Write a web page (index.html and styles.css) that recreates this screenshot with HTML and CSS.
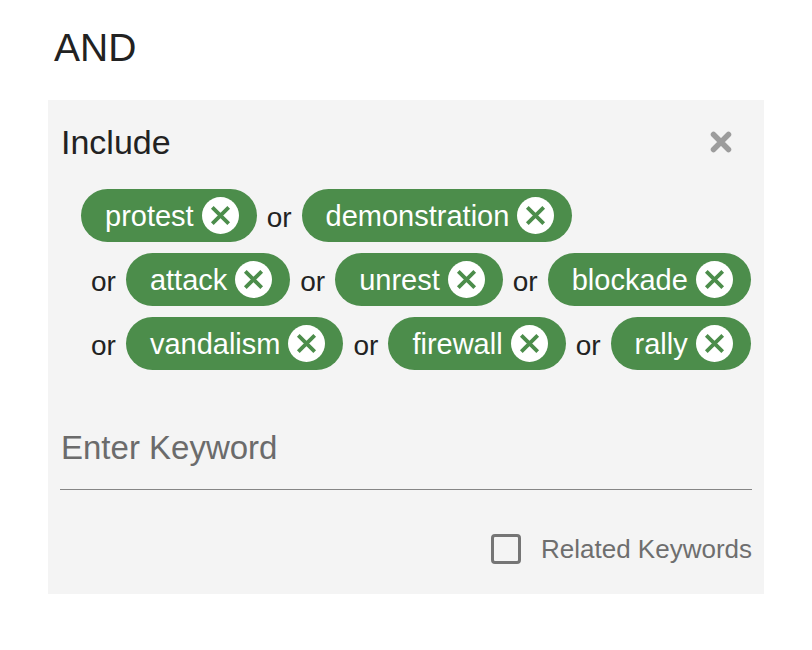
FILE: index.html
```html
<!DOCTYPE html>
<html lang="en">
<head>
<meta charset="utf-8">
<meta name="viewport" content="width=device-width, initial-scale=1">
<title>Keywords</title>
<link rel="stylesheet" href="styles.css">
</head>
<body>
<svg class="defs" aria-hidden="true">
  <symbol id="chip-x" viewBox="0 0 37 37"><circle cx="18.500" cy="18.500" r="18.500" fill="#fff"/><path d="M10.300 10.300 26.700 26.700M26.700 10.300 10.300 26.700" stroke="#4c8d4b" stroke-width="3.800"/></symbol>
</svg>
<main class="page">
  <h1 class="operator">AND</h1>
  <section class="panel">
    <header class="panel-head">
      <h2 class="title">Include</h2>
      <button class="close" type="button" aria-label="Close"><svg viewBox="0 0 22 22"><path d="M3.500 3.500 18.500 18.500M18.500 3.500 3.500 18.500" stroke="#9c9c9c" stroke-width="5.500" stroke-linecap="round"/></svg></button>
    </header>
    <ul class="chips">
      <li class="item"><span class="chip">protest<button class="remove" type="button" aria-label="Remove protest"><svg><use href="#chip-x"/></svg></button></span></li>
      <li class="item"><span class="or">or</span><span class="chip">demonstration<button class="remove" type="button" aria-label="Remove demonstration"><svg><use href="#chip-x"/></svg></button></span></li>
      <li class="item"><span class="or">or</span><span class="chip">attack<button class="remove" type="button" aria-label="Remove attack"><svg><use href="#chip-x"/></svg></button></span></li>
      <li class="item"><span class="or">or</span><span class="chip">unrest<button class="remove" type="button" aria-label="Remove unrest"><svg><use href="#chip-x"/></svg></button></span></li>
      <li class="item"><span class="or">or</span><span class="chip">blockade<button class="remove" type="button" aria-label="Remove blockade"><svg><use href="#chip-x"/></svg></button></span></li>
      <li class="item"><span class="or">or</span><span class="chip">vandalism<button class="remove" type="button" aria-label="Remove vandalism"><svg><use href="#chip-x"/></svg></button></span></li>
      <li class="item"><span class="or">or</span><span class="chip">firewall<button class="remove" type="button" aria-label="Remove firewall"><svg><use href="#chip-x"/></svg></button></span></li>
      <li class="item"><span class="or">or</span><span class="chip">rally<button class="remove" type="button" aria-label="Remove rally"><svg><use href="#chip-x"/></svg></button></span></li>
    </ul>
    <input class="keyword" type="text" placeholder="Enter Keyword" aria-label="Enter Keyword">
    <label class="related"><input class="check" type="checkbox">Related Keywords</label>
  </section>
</main>
</body>
</html>
```
FILE: styles.css
```css
* { box-sizing: border-box; }

body {
  margin: 0;
  background: #fff;
  color: #222;
  font-family: "Liberation Sans", Arial, sans-serif;
}

.defs { display: none; }

.page { padding: 24px 48px; }

.operator {
  margin: 0 0 28px;
  padding-left: 6px;
  font-size: 39px;
  line-height: 48px;
  font-weight: 400;
}

.panel {
  padding: 20px 12px 29px;
  background: #f4f4f4;
}

.panel-head {
  display: flex;
  align-items: center;
  justify-content: space-between;
  padding: 0 20px 0 1px;
}

.title {
  margin: 0;
  font-size: 34px;
  line-height: 44px;
  font-weight: 400;
}

button {
  display: block;
  padding: 0;
  border: 0;
  background: none;
  cursor: pointer;
}

button svg {
  display: block;
  width: 100%;
  height: 100%;
}

.close {
  width: 22px;
  height: 22px;
}

.chips {
  display: flex;
  flex-wrap: wrap;
  row-gap: 11px;
  margin: 25px 0 0;
  padding: 0 0 0 21px;
  list-style: none;
}

.item {
  display: flex;
  align-items: center;
}

.or {
  padding: 4px 10px 0;
  font-size: 28px;
  line-height: 32px;
}

.chip {
  display: flex;
  align-items: center;
  gap: 8px;
  height: 53px;
  padding: 0 18px 0 24px;
  border-radius: 27px;
  background: #4c8d4b;
  color: #fff;
  font-size: 29px;
  line-height: 32px;
}

.remove {
  width: 37px;
  height: 37px;
}

.keyword {
  display: block;
  width: 100%;
  height: 84px;
  margin-top: 36px;
  padding: 0 0 0 1px;
  border: 0;
  border-bottom: 1px solid #858585;
  border-radius: 0;
  background: none;
  color: #222;
  font: 33px "Liberation Sans", Arial, sans-serif;
  outline: 0;
}

.keyword::placeholder {
  color: #6b6b6b;
  opacity: 1;
}

.related {
  display: flex;
  align-items: center;
  justify-content: flex-end;
  gap: 20px;
  margin-top: 43px;
  color: #6e6e6e;
  font-size: 26px;
  line-height: 32px;
}

.check {
  appearance: none;
  width: 30px;
  height: 30px;
  margin: 0;
  border: 3px solid #757575;
  border-radius: 4px;
}

.check:checked { background: #757575; }
```
